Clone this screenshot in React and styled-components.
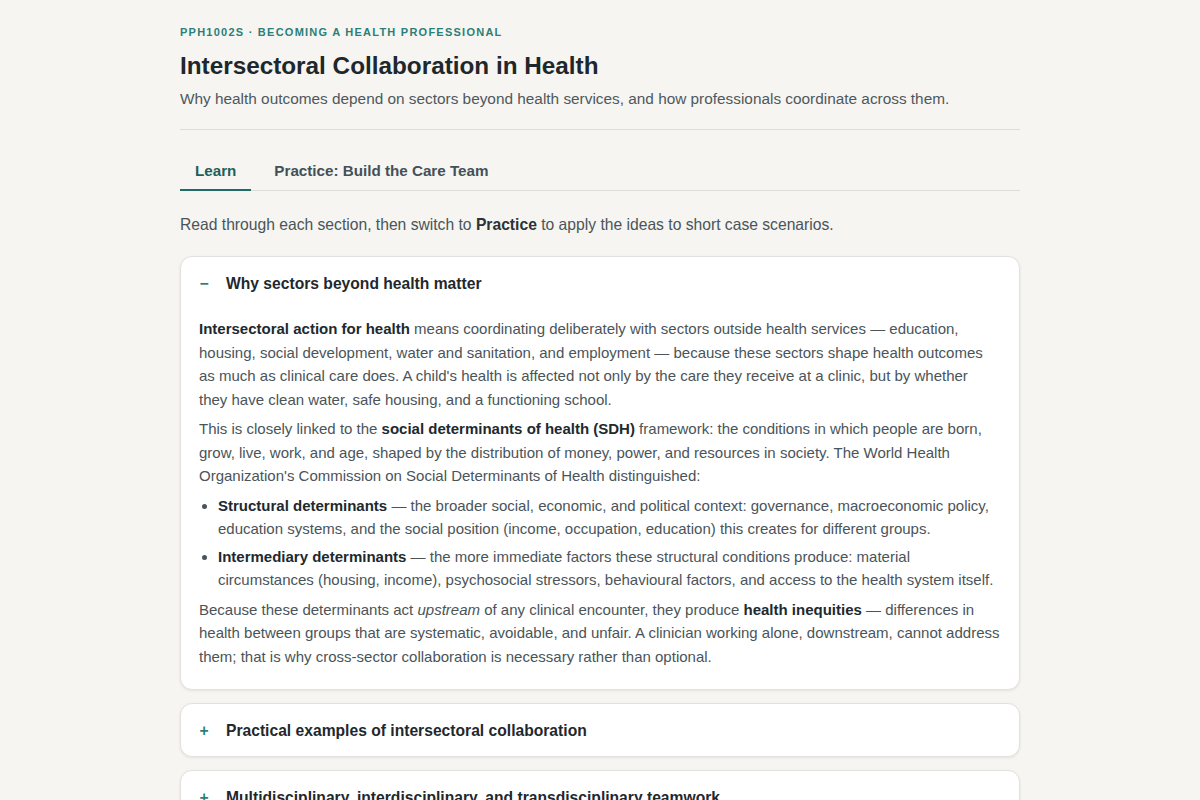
import React, { useState } from 'react';
import styled, { createGlobalStyle } from 'styled-components';

const GlobalStyle = createGlobalStyle`
  html, body {
    margin: 0;
    padding: 0;
    background: #f6f5f1;
  }
  body {
    font-family: "Liberation Sans", Arial, sans-serif;
    color: #4a5459;
  }
`;

const Page = styled.div`
  max-width: 840px;
  margin: 0 auto;
  padding: 24px 0 40px;
`;

const Eyebrow = styled.div`
  font-size: 11px;
  font-weight: 700;
  letter-spacing: 0.113em;
  text-transform: uppercase;
  color: #2b7f78;
  line-height: 16px;
`;

const Title = styled.h1`
  margin: 10px 0 0;
  font-size: 24.3px;
  line-height: 32px;
  font-weight: 700;
  color: #1e272c;
`;

const Subtitle = styled.p`
  margin: 6px 0 0;
  font-size: 15.37px;
  line-height: 22px;
  color: #4f585d;
`;

const Divider = styled.hr`
  border: 0;
  border-top: 1px solid #dddcd8;
  margin: 19px 0 0;
`;

const TabBar = styled.div`
  display: flex;
  gap: 8px;
  margin-top: 22px;
  border-bottom: 1px solid #dddcd8;
`;

const Tab = styled.button`
  background: none;
  border: 0;
  padding: 9px 15px 8px;
  margin-bottom: -1px;
  font-family: inherit;
  font-size: 15.2px;
  line-height: 20px;
  font-weight: 700;
  cursor: pointer;
  color: ${p => (p.$active ? '#1f5f5a' : '#445057')};
  border-bottom: 2px solid ${p => (p.$active ? '#1f6b65' : 'transparent')};
`;

const Intro = styled.p`
  margin: 23px 0 0;
  font-size: 15.67px;
  line-height: 22px;
  color: #4a5459;

  strong {
    color: #2a3337;
  }
`;

const Sections = styled.div`
  display: flex;
  flex-direction: column;
  gap: 13px;
  margin-top: 20px;
`;

const Card = styled.div`
  background: #ffffff;
  border: 1px solid #e2e1dd;
  border-radius: 12px;
  box-shadow: 0 1px 3px rgba(0, 0, 0, 0.08);
`;

const CardHeader = styled.button`
  display: flex;
  align-items: center;
  gap: 17px;
  width: 100%;
  background: none;
  border: 0;
  padding: 15px 18px 13px;
  font-family: inherit;
  font-size: 15.65px;
  line-height: 24px;
  font-weight: 700;
  color: #1f282d;
  text-align: left;
  cursor: pointer;
`;

const Sign = styled.span`
  width: 10px;
  display: inline-flex;
  justify-content: center;
  color: #2b7f78;
  font-weight: 700;
`;

const CardBody = styled.div`
  padding: 8px 19.5px 21px 18px;
  font-size: 15px;
  line-height: 23.5px;
  color: #4a5459;

  p {
    margin: 0 0 6px;
  }
  p:last-child {
    margin-bottom: 0;
  }
  strong {
    color: #20292e;
  }
`;

const List = styled.ul`
  margin: 0 0 6px;
  padding-left: 19px;

  li {
    margin-bottom: 4px;
  }
  li::marker {
    color: #4a5459;
  }
`;

const sections = [
  { title: 'Why sectors beyond health matter', open: true },
  { title: 'Practical examples of intersectoral collaboration' },
  { title: 'Multidisciplinary, interdisciplinary, and transdisciplinary teamwork' },
];

const FirstSection = () => (
  <CardBody>
    <p>
      <strong>Intersectoral action for health</strong> means coordinating deliberately with sectors
      outside health services — education, housing, social development, water and sanitation, and
      employment — because these sectors shape health outcomes as much as clinical care does. A
      child's health is affected not only by the care they receive at a clinic, but by whether they
      have clean water, safe housing, and a functioning school.
    </p>
    <p>
      This is closely linked to the <strong>social determinants of health (SDH)</strong> framework:
      the conditions in which people are born, grow, live, work, and age, shaped by the distribution
      of money, power, and resources in society. The World Health Organization's Commission on
      Social Determinants of Health distinguished:
    </p>
    <List>
      <li>
        <strong>Structural determinants</strong> — the broader social, economic, and political
        context: governance, macroeconomic policy, education systems, and the social position
        (income, occupation, education) this creates for different groups.
      </li>
      <li>
        <strong>Intermediary determinants</strong> — the more immediate factors these structural
        conditions produce: material circumstances (housing, income), psychosocial stressors,
        behavioural factors, and access to the health system itself.
      </li>
    </List>
    <p>
      Because these determinants act <em>upstream</em> of any clinical encounter, they produce{' '}
      <strong>health inequities</strong> — differences in health between groups that are
      systematic, avoidable, and unfair. A clinician working alone, downstream, cannot address them;
      that is why cross-sector collaboration is necessary rather than optional.
    </p>
  </CardBody>
);

export default function App() {
  const [tab, setTab] = useState('learn');
  const [open, setOpen] = useState(sections.map(s => !!s.open));

  const toggle = i => setOpen(o => o.map((v, j) => (j === i ? !v : v)));

  return (
    <>
      <GlobalStyle />
      <Page>
        <Eyebrow>PPH1002S · Becoming a Health Professional</Eyebrow>
        <Title>Intersectoral Collaboration in Health</Title>
        <Subtitle>
          Why health outcomes depend on sectors beyond health services, and how professionals
          coordinate across them.
        </Subtitle>
        <Divider />
        <TabBar>
          <Tab $active={tab === 'learn'} onClick={() => setTab('learn')}>Learn</Tab>
          <Tab $active={tab === 'practice'} onClick={() => setTab('practice')}>
            Practice: Build the Care Team
          </Tab>
        </TabBar>
        <Intro>
          Read through each section, then switch to <strong>Practice</strong> to apply the ideas to
          short case scenarios.
        </Intro>
        <Sections>
          {sections.map((s, i) => (
            <Card key={s.title}>
              <CardHeader onClick={() => toggle(i)}>
                <Sign>{open[i] ? '−' : '+'}</Sign>
                {s.title}
              </CardHeader>
              {open[i] && i === 0 && <FirstSection />}
            </Card>
          ))}
        </Sections>
      </Page>
    </>
  );
}
